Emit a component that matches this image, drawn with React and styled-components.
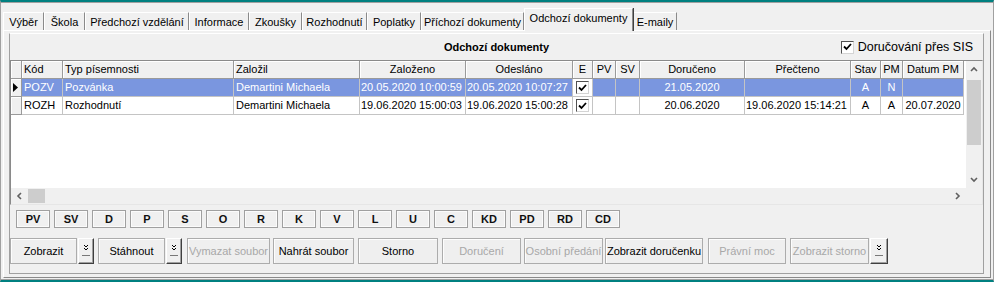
import styled, { createGlobalStyle } from "styled-components";

const GlobalStyle = createGlobalStyle`
  html, body { margin: 0; padding: 0; background: #f0f0f0; }
  body { font-family: "Liberation Sans", Arial, sans-serif; font-size: 11px; color: #000; }
  * { box-sizing: border-box; }
`;

const cols = [11, 41, 171, 126, 106, 107, 20, 23, 24, 105, 106, 30, 22, 61];
const template = cols.map((c) => c + "px").join(" ");

const Window = styled.div`
  width: 994px;
  height: 282px;
  display: flex;
  flex-direction: column;
  background: #f0f0f0;
  border-top: 2px solid #008080;
  border-bottom: 2px solid #008080;
  border-left: 1px solid #a0a0a0;
  border-right: 1px solid #a0a0a0;
  overflow: hidden;
`;

const Frame = styled.div`
  flex: 1;
  display: flex;
  flex-direction: column;
  border-top: 1px solid #a0a0a0;
  border-bottom: 1px solid #a0a0a0;
  padding: 0 2px 1px 2px;
`;

const TabBar = styled.div`
  height: 27px;
  display: flex;
  align-items: flex-end;
`;

const Tab = styled.div`
  width: ${(p) => p.$w}px;
  height: ${(p) => (p.$active ? 23 : 18)}px;
  margin-bottom: ${(p) => (p.$active ? -1 : 0)}px;
  position: relative;
  z-index: ${(p) => (p.$active ? 2 : 1)};
  display: flex;
  align-items: ${(p) => (p.$active ? "flex-start" : "center")};
  justify-content: center;
  padding-top: ${(p) => (p.$active ? 3 : 0)}px;
  background: #f0f0f0;
  border-top: 1px solid #fff;
  border-left: 1px solid #fff;
  border-right: 1px solid #8a8a8a;
  box-shadow: ${(p) => (p.$active ? "1px 0 0 #404040" : "none")};
  white-space: nowrap;
`;

const TabPage = styled.div`
  flex: 1;
  display: flex;
  flex-direction: column;
  border: 1px solid;
  border-color: #fff #8a8a8a #8a8a8a #fff;
  padding: 2px 6px 3px 5px;
`;

const Group = styled.div`
  flex: 1;
  display: flex;
  flex-direction: column;
  border: 1px solid;
  border-color: #fff #a0a0a0 #a0a0a0 #a0a0a0;
`;

const HeaderStrip = styled.div`
  height: 26px;
  display: grid;
  grid-template-columns: 1fr auto 1fr;
  align-items: center;
`;

const Title = styled.div`
  grid-column: 2;
  font-weight: bold;
  font-size: 11px;
`;

const SisCheck = styled.label`
  grid-column: 3;
  justify-self: end;
  display: flex;
  align-items: center;
  gap: 4px;
  margin-right: 10px;
  font-size: 12.5px;
`;

const Box = styled.span`
  width: 13px;
  height: 13px;
  display: inline-flex;
  align-items: center;
  justify-content: center;
  background: #fff;
  border: 1px solid;
  border-color: #505050 #d4d4d4 #d4d4d4 #505050;
`;

const Grid = styled.div`
  height: 145px;
  display: grid;
  grid-template-columns: 1fr 16px;
  grid-template-rows: 1fr 16px;
  border: 1px solid;
  border-color: #8a8a8a #e6e6e6 #e6e6e6 #8a8a8a;
  background: #fff;
`;

const DataArea = styled.div`
  background: #fff;
  overflow: hidden;
`;

const Row = styled.div`
  display: grid;
  grid-template-columns: ${template};
  height: 18px;
`;

const Cell = styled.div`
  height: 18px;
  line-height: 17px;
  padding: 0 ${(p) => (p.$tight ? 1 : 2)}px;
  white-space: nowrap;
  overflow: hidden;
  text-align: ${(p) => p.$align || "left"};
  border-right: 1px solid ${(p) => (p.$head ? "#9a9a9a" : "#c4c4c4")};
  border-bottom: 1px solid ${(p) => (p.$head ? "#9a9a9a" : "#c4c4c4")};
  background: ${(p) => (p.$head ? "#f0f0f0" : p.$sel ? "#7a96df" : "#fff")};
  color: ${(p) => (p.$sel && !p.$head ? "#fff" : "#000")};
  box-shadow: ${(p) => (p.$head ? "inset 1px 1px 0 #fff" : "none")};
  display: ${(p) => (p.$center ? "flex" : "block")};
  align-items: center;
  justify-content: center;
`;

const VScroll = styled.div`
  display: flex;
  flex-direction: column;
  background: #f0f0f0;
`;

const HScroll = styled.div`
  display: flex;
  align-items: stretch;
  background: #f0f0f0;
`;

const ArrowBox = styled.div`
  width: ${(p) => p.$w || 16}px;
  height: ${(p) => p.$h || 16}px;
  display: flex;
  align-items: center;
  justify-content: center;
  flex-shrink: 0;
`;

const Track = styled.div`
  flex: 1;
  display: flex;
  flex-direction: ${(p) => (p.$vertical ? "column" : "row")};
  padding: ${(p) => (p.$vertical ? "2px 0 0 1px" : "1px 0 1px 0")};
`;

const Thumb = styled.div`
  background: #cdcdcd;
  width: ${(p) => (p.$vertical ? "14px" : "17px")};
  height: ${(p) => (p.$vertical ? "65px" : "14px")};
`;

const Corner = styled.div`
  background: #f0f0f0;
`;

const LetterRow = styled.div`
  display: flex;
  gap: 4px;
  margin-top: 5px;
  padding-left: 6px;
`;

const LetterButton = styled.div`
  width: 34px;
  height: 18px;
  display: flex;
  align-items: center;
  justify-content: center;
  font-weight: bold;
  font-size: 11px;
  color: #101010;
  background: #f0f0f0;
  border: 1px solid #a0a0a0;
  box-shadow: inset 0 0 0 1px #fbfbfb;
`;

const ButtonRow = styled.div`
  display: flex;
  margin-top: 10px;
`;

const ActionButton = styled.div`
  width: ${(p) => p.$w}px;
  height: 26px;
  margin-left: ${(p) => p.$gap || 0}px;
  display: flex;
  align-items: center;
  justify-content: center;
  font-size: 11px;
  white-space: nowrap;
  color: ${(p) => (p.$disabled ? "#a8a8a8" : "#000")};
  background: #efefef;
  border: 1px solid #acacac;
  box-shadow: inset 1px 1px 0 #fdfdfd;
`;

const DropButton = styled.div`
  width: ${(p) => p.$w || 16}px;
  height: 26px;
  margin-left: 1px;
  display: flex;
  align-items: flex-start;
  justify-content: center;
  padding-top: 5px;
  background: #f0f0f0;
  border-top: 1px solid #fff;
  border-left: 1px solid #fff;
  border-right: 1px solid #404040;
  border-bottom: 1px solid #404040;
  box-shadow: inset -1px -1px 0 #a0a0a0;
`;

const Chevron = ({ dir }) => {
  const pts = {
    up: "1,5 4,2 7,5",
    down: "1,2 4,5 7,2",
    left: "5,1 2,4 5,7",
    right: "2,1 5,4 2,7",
  }[dir];
  return (
    <svg width="8" height="8" viewBox="0 0 8 8">
      <polyline points={pts} fill="none" stroke="#606060" strokeWidth="1.6" />
    </svg>
  );
};

const Tick = () => (
  <svg width="9" height="8" viewBox="0 0 9 8">
    <path d="M1 3.5 L3.5 6 L8 1" fill="none" stroke="#000" strokeWidth="1.8" />
  </svg>
);

const Pointer = () => (
  <svg width="6" height="9" viewBox="0 0 6 9">
    <polygon points="0,0 5,4.5 0,9" fill="#000" />
  </svg>
);

const ExpandIcon = () => (
  <svg width="8" height="14" viewBox="0 0 8 14">
    <polyline points="2,1 4,3 6,1" fill="none" stroke="#000" strokeWidth="1" />
    <polyline points="2,4 4,6 6,4" fill="none" stroke="#000" strokeWidth="1" />
    {[0, 2, 4, 6].map((x) => (
      <rect key={x} x={x + 0.5} y="11" width="1" height="1" fill="#000" />
    ))}
  </svg>
);

const tabs = [
  ["Výběr", 41],
  ["Škola", 41],
  ["Předchozí vzdělání", 104],
  ["Informace", 60],
  ["Zkoušky", 53],
  ["Rozhodnutí", 65],
  ["Poplatky", 54],
  ["Příchozí dokumenty", 103],
  ["Odchozí dokumenty", 109, true],
  ["E-maily", 44],
];

const headers = [
  ["", "left"],
  ["Kód", "left"],
  ["Typ písemnosti", "left"],
  ["Založil", "left"],
  ["Založeno", "center"],
  ["Odesláno", "center"],
  ["E", "center"],
  ["PV", "center"],
  ["SV", "center"],
  ["Doručeno", "center"],
  ["Přečteno", "center"],
  ["Stav", "center"],
  ["PM", "center"],
  ["Datum PM", "center"],
];

const rows = [
  {
    sel: true,
    cells: ["POZV", "Pozvánka", "Demartini Michaela", "20.05.2020 10:00:59", "20.05.2020 10:07:27", "21.05.2020", "", "A", "N", ""],
  },
  {
    sel: false,
    cells: ["ROZH", "Rozhodnutí", "Demartini Michaela", "19.06.2020 15:00:03", "19.06.2020 15:00:28", "20.06.2020", "19.06.2020 15:14:21", "A", "A", "20.07.2020"],
  },
];

const letters = ["PV", "SV", "D", "P", "S", "O", "R", "K", "V", "L", "U", "C", "KD", "PD", "RD", "CD"];

const DataRow = ({ row }) => {
  const [kod, typ, zalozil, zalozeno, odeslano, doruceno, precteno, stav, pm, datumPm] = row.cells;
  const s = row.sel;
  return (
    <Row>
      <Cell $head $center>{s && <Pointer />}</Cell>
      <Cell $sel={s}>{kod}</Cell>
      <Cell $sel={s}>{typ}</Cell>
      <Cell $sel={s}>{zalozil}</Cell>
      <Cell $sel={s} $tight>{zalozeno}</Cell>
      <Cell $sel={s} $tight>{odeslano}</Cell>
      <Cell $center>
        <Box><Tick /></Box>
      </Cell>
      <Cell $sel={s} />
      <Cell $sel={s} />
      <Cell $sel={s} $align="center">{doruceno}</Cell>
      <Cell $sel={s} $tight>{precteno}</Cell>
      <Cell $sel={s} $align="center">{stav}</Cell>
      <Cell $sel={s} $align="center">{pm}</Cell>
      <Cell $sel={s} $tight $align="center">{datumPm}</Cell>
    </Row>
  );
};

const App = () => {
  return (
    <>
      <GlobalStyle />
      <Window>
        <Frame>
          <TabBar>
            {tabs.map(([label, w, active]) => (
              <Tab key={label} $w={w} $active={active}>
                {label}
              </Tab>
            ))}
          </TabBar>
          <TabPage>
            <Group>
              <HeaderStrip>
                <Title>Odchozí dokumenty</Title>
                <SisCheck>
                  <Box><Tick /></Box>
                  Doručování přes SIS
                </SisCheck>
              </HeaderStrip>

              <Grid>
                <DataArea>
                  <Row>
                    {headers.map(([h, align], i) => (
                      <Cell key={i} $head $align={align}>{h}</Cell>
                    ))}
                  </Row>
                  {rows.map((r, i) => (
                    <DataRow key={i} row={r} />
                  ))}
                </DataArea>
                <VScroll>
                  <ArrowBox $h={17}><Chevron dir="up" /></ArrowBox>
                  <Track $vertical>
                    <Thumb $vertical />
                  </Track>
                  <ArrowBox $h={17}><Chevron dir="down" /></ArrowBox>
                </VScroll>
                <HScroll>
                  <ArrowBox $w={17}><Chevron dir="left" /></ArrowBox>
                  <Track>
                    <Thumb />
                  </Track>
                  <ArrowBox $w={17}><Chevron dir="right" /></ArrowBox>
                </HScroll>
                <Corner />
              </Grid>

              <LetterRow>
                {letters.map((l) => (
                  <LetterButton key={l}>{l}</LetterButton>
                ))}
              </LetterRow>

              <ButtonRow>
                <ActionButton $w={67}>Zobrazit</ActionButton>
                <DropButton><ExpandIcon /></DropButton>
                <ActionButton $w={67} $gap={4}>Stáhnout</ActionButton>
                <DropButton><ExpandIcon /></DropButton>
                <ActionButton $w={83} $gap={5} $disabled>Vymazat soubor</ActionButton>
                <ActionButton $w={81} $gap={3}>Nahrát soubor</ActionButton>
                <ActionButton $w={80} $gap={4}>Storno</ActionButton>
                <ActionButton $w={79} $gap={4} $disabled>Doručení</ActionButton>
                <ActionButton $w={79} $gap={3} $disabled>Osobní předání</ActionButton>
                <ActionButton $w={98} $gap={2}>Zobrazit doručenku</ActionButton>
                <ActionButton $w={78} $gap={5} $disabled>Právní moc</ActionButton>
                <ActionButton $w={79} $gap={4} $disabled>Zobrazit storno</ActionButton>
                <DropButton $w={18}><ExpandIcon /></DropButton>
              </ButtonRow>
            </Group>
          </TabPage>
        </Frame>
      </Window>
    </>
  );
};

export default App;
